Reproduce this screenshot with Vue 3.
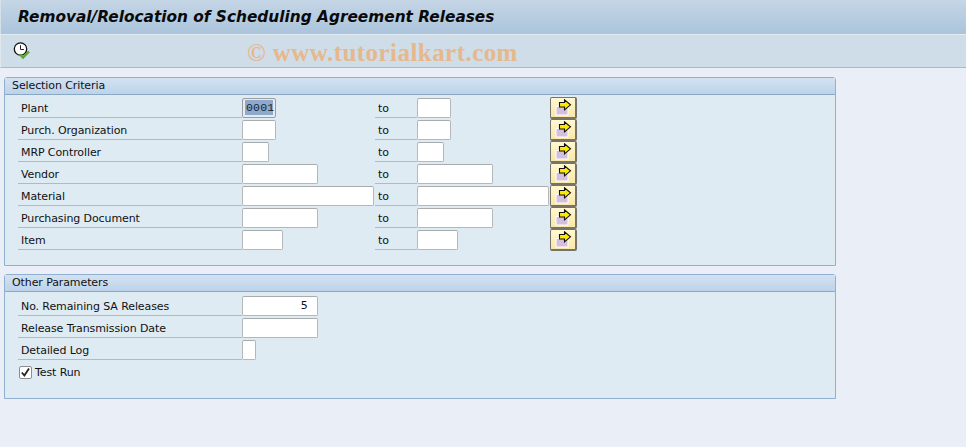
<script setup>
const selection = [
  { label: 'Plant', w: 34, tw: 34, value: '0001', selected: true },
  { label: 'Purch. Organization', w: 34, tw: 34 },
  { label: 'MRP Controller', w: 27, tw: 27 },
  { label: 'Vendor', w: 76, tw: 76 },
  { label: 'Material', w: 132, tw: 132 },
  { label: 'Purchasing Document', w: 76, tw: 76 },
  { label: 'Item', w: 41, tw: 41 }
]
const params = [
  { label: 'No. Remaining SA Releases', w: 76, value: '5' },
  { label: 'Release Transmission Date', w: 76 },
  { label: 'Detailed Log', w: 13 }
]
</script>

<template>
  <div class="screen">
    <header class="title">Removal/Relocation of Scheduling Agreement Releases</header>
    <div class="toolbar">
      <svg class="clock" width="18" height="18" viewBox="0 0 18 18">
        <circle cx="7.5" cy="7" r="6.2" fill="#fff" stroke="#111" stroke-width="1.3" />
        <path d="M7.5 3.2v4.3h3.4" fill="none" stroke="#222" stroke-width="1" />
        <path d="M7 12.5l3 3 6-6" fill="none" stroke="#5aa62e" stroke-width="2.4" />
      </svg>
      <span class="watermark">© www.tutorialkart.com</span>
    </div>

    <section class="panel first">
      <h2 class="panel-head">Selection Criteria</h2>
      <div class="panel-body">
        <div v-for="row in selection" :key="row.label" class="row">
          <span class="label">{{ row.label }}</span>
          <span class="cell">
            <span class="field mono" :class="{ selected: row.selected }" :style="{ width: row.w + 'px' }">
              <span class="sel-text">{{ row.value }}</span>
            </span>
          </span>
          <span class="to">to</span>
          <span class="cell">
            <span class="field" :style="{ width: row.tw + 'px' }"></span>
          </span>
          <button class="multi" type="button" aria-label="Multiple selection">
            <svg width="19" height="17" viewBox="0 0 19 17">
              <rect x="2" y="7.5" width="12" height="8.5" fill="#d4bfdf" stroke="#fff" />
              <path d="M5.5 3.5h5V.8l6 5-6 5V8h-5z" fill="#ffe800" stroke="#111" stroke-width="1.1" />
            </svg>
          </button>
        </div>
      </div>
    </section>

    <section class="panel second">
      <h2 class="panel-head">Other Parameters</h2>
      <div class="panel-body">
        <div v-for="row in params" :key="row.label" class="row">
          <span class="label">{{ row.label }}</span>
          <span class="cell">
            <span class="field mono right" :style="{ width: row.w + 'px' }">{{ row.value }}</span>
          </span>
        </div>
        <label class="check-row">
          <span class="check">
            <svg width="11" height="11" viewBox="0 0 11 11">
              <path d="M1.8 5.5l2.6 3 4.6-7" fill="none" stroke="#222" stroke-width="1.8" />
            </svg>
          </span>
          <span>Test Run</span>
        </label>
      </div>
    </section>
  </div>
</template>

<style>
html, body { margin: 0; background: #eaeff7; }
</style>

<style scoped>
.screen {
  width: 966px;
  height: 447px;
  overflow: hidden;
  background: #eaeff7;
  font-family: "DejaVu Sans", sans-serif;
  font-size: 11px;
  letter-spacing: -0.1px;
  color: #111;
}
.title {
  box-sizing: border-box;
  height: 34px;
  padding: 3px 0 0 17px;
  font-family: "DejaVu Sans", sans-serif;
  font-weight: 700;
  font-style: italic;
  font-size: 15.35px;
  letter-spacing: 0;
  line-height: 28px;
  color: #0a0a0a;
  background: linear-gradient(#c5d6e6, #abc4dc);
  border-left: 1px solid #d5e0ea;
}
.toolbar {
  position: relative;
  box-sizing: border-box;
  height: 34px;
  padding: 7px 0 0 12px;
  background: #cfdde8;
  border-top: 1px solid #e4ecf3;
  border-left: 1px solid #dfe7ef;
  border-bottom: 1px solid #a9b9c8;
}
.clock { display: block; }
.watermark {
  position: absolute;
  left: 246px;
  top: 3px;
  font-family: "Liberation Serif", serif;
  font-weight: 700;
  font-size: 25px;
  line-height: 30px;
  letter-spacing: 0.45px;
  color: #e6b88c;
  white-space: nowrap;
}
.panel {
  box-sizing: border-box;
  width: 832px;
  margin-left: 4px;
  border: 1px solid #8fb0d0;
  border-radius: 3px 3px 0 0;
  background: #deebf3;
}
.first { margin-top: 9px; height: 189px; }
.second { margin-top: 8px; height: 125px; }
.panel-head {
  box-sizing: border-box;
  height: 17px;
  margin: 0;
  padding-left: 7px;
  font-size: 11px;
  font-weight: 400;
  line-height: 15px;
  background: linear-gradient(#d3e2f1, #bdd3ea);
  border-bottom: 1px solid #8aa8c4;
}
.panel-body { padding: 2px 0 0 13px; }
.second .panel-body { padding-top: 3px; }
.row {
  display: flex;
  height: 22px;
}
.label {
  box-sizing: border-box;
  width: 224px;
  height: 21px;
  padding-left: 3px;
  line-height: 23px;
  border-bottom: 1px solid #b4b9bd;
}
.cell {
  display: block;
  width: 133px;
  padding-top: 1px;
}
.to {
  box-sizing: border-box;
  width: 42px;
  height: 21px;
  padding-left: 3px;
  line-height: 23px;
  border-bottom: 1px solid #b4b9bd;
}
.field {
  display: block;
  box-sizing: border-box;
  height: 20px;
  padding: 0 3px;
  line-height: 17px;
  background: #fff;
  border: 1px solid #b5b8ba;
  border-top-color: #a9acae;
  border-radius: 2px;
}
.mono { font-family: "Liberation Mono", monospace; font-size: 11.5px; letter-spacing: 0.2px; }
.right { text-align: right; padding-right: 9px; font-family: "DejaVu Sans", sans-serif; font-size: 11px; }
.selected { background: #e4ecf3; padding: 0 2px; border-color: #9b9ea0; }
.selected .sel-text { display: block; margin: 1px 0; padding-left: 1px; line-height: 15px; background: #8fa9cb; color: #12253c; }
.multi {
  display: flex;
  align-items: center;
  justify-content: center;
  box-sizing: border-box;
  width: 27px;
  height: 22px;
  margin: 0;
  padding: 0;
  background: linear-gradient(#fff8d2, #f9e7a4);
  border: 1px solid #77736a;
  border-width: 1px 2px 2px 1px;
  border-radius: 2px;
}
.check-row {
  display: flex;
  align-items: center;
  gap: 3px;
  height: 22px;
  padding-left: 1px;
}
.check {
  display: flex;
  align-items: center;
  justify-content: center;
  box-sizing: border-box;
  width: 13px;
  height: 13px;
  background: #fff;
  border: 1px solid #8b8d8f;
  border-radius: 2px;
}
</style>
